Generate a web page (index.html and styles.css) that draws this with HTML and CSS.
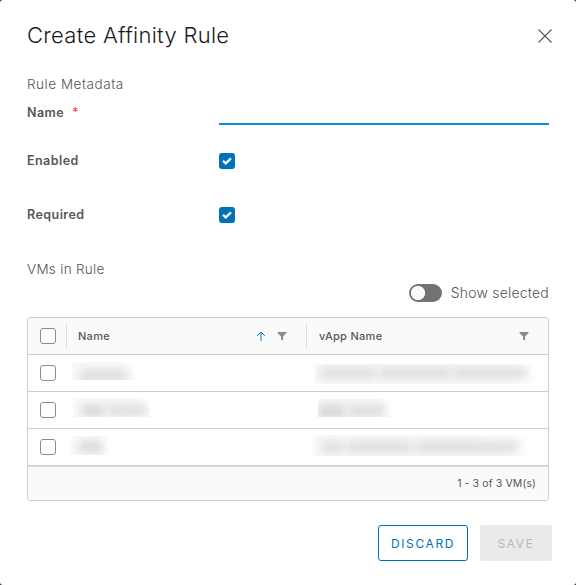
FILE: index.html
```html
<!DOCTYPE html>
<html lang="en">
<head>
<meta charset="utf-8">
<title>Create Affinity Rule</title>
<link rel="stylesheet" href="styles.css">
</head>
<body>
<main class="modal">
  <header class="modal-header">
    <h1 class="title">Create Affinity Rule</h1>
    <svg class="close" viewBox="0 0 16 16"><path d="M1.5 1.5l13 13M14.5 1.5l-13 13"/></svg>
  </header>
  <h2 class="section meta">Rule Metadata</h2>
  <div class="field name-field">
    <label class="label">Name<span class="star">*</span></label>
    <div class="input"></div>
  </div>
  <div class="field check-field">
    <label class="label">Enabled</label>
    <span class="box checked"><svg viewBox="0 0 16 16"><path d="M4 7.8l2.7 2.6L12 5.4"/></svg></span>
  </div>
  <div class="field check-field">
    <label class="label">Required</label>
    <span class="box checked"><svg viewBox="0 0 16 16"><path d="M4 7.8l2.7 2.6L12 5.4"/></svg></span>
  </div>
  <h2 class="section vms">VMs in Rule</h2>
  <div class="toggle-row">
    <span class="switch"></span><span class="toggle-label">Show selected</span>
  </div>
  <section class="grid">
    <div class="row head">
      <span class="box"></span>
      <div class="col first"><span class="th">Name</span>
        <svg class="sort" viewBox="0 0 10 10"><path d="M5 10V1M1.2 4.8L5 1l3.8 3.8"/></svg>
        <svg class="filter" viewBox="0 0 10 9"><path d="M.5 0h9v1L6.1 4.5V8.6L4 7.6V4.5L.5 1z"/></svg>
      </div>
      <div class="col second"><span class="th">vApp Name</span>
        <svg class="filter" viewBox="0 0 10 9"><path d="M.5 0h9v1L6.1 4.5V8.6L4 7.6V4.5L.5 1z"/></svg>
      </div>
    </div>
    <div class="row"><span class="box"></span>
      <div class="cell first"><div class="mask a1"><i></i></div></div>
      <div class="cell"><div class="mask b1"><i></i><i></i><i></i></div></div>
    </div>
    <div class="row"><span class="box"></span>
      <div class="cell first"><div class="mask a2"><i></i><i></i></div></div>
      <div class="cell"><div class="mask b2"><i></i><i></i></div></div>
    </div>
    <div class="row"><span class="box"></span>
      <div class="cell first"><div class="mask a3"><i></i></div></div>
      <div class="cell"><div class="mask b3"><i></i><i></i><i></i></div></div>
    </div>
    <footer class="grid-footer">1 - 3 of 3 VM(s)</footer>
  </section>
  <div class="actions">
    <button class="btn discard">DISCARD</button>
    <button class="btn save" disabled>SAVE</button>
  </div>
</main>
</body>
</html>
```
FILE: styles.css
```css
* { box-sizing: border-box; }
body { margin: 0; background: #313131; font-family: Inter, "Noto Sans", sans-serif; color: #565656; }
.modal { width: 576px; height: 585px; background: #fff; border-radius: 3px; padding: 20px 23px 0 27px; display: flex; flex-direction: column; }
.modal-header { display: flex; justify-content: space-between; align-items: center; height: 32px; }
.title { margin: 0; font-size: 22px; font-weight: 300; line-height: 30px; padding-bottom: 2px; letter-spacing: 0.28px; color: #1c1c1c; }
.close { width: 16px; height: 16px; fill: none; stroke: #565656; stroke-width: 1.1; }
.section { margin: 0; font-size: 13.5px; font-weight: 300; line-height: 20px; letter-spacing: 0.3px; color: #565656; }
.meta { margin-top: 22px; letter-spacing: 0.53px; }
.field { display: flex; align-items: center; }
.label { width: 192px; font-size: 12.5px; font-weight: 600; color: #565656; line-height: 20px; letter-spacing: 0.45px; }
.star { color: #f04040; font-weight: 400; margin-left: 8px; }
.name-field { height: 31px; }
.name-field .label { margin-top: 6px; }
.input { width: 330px; height: 31px; border-bottom: 2px solid #0095d3; }
.check-field { height: 16px; margin-top: 28px; }
.check-field + .check-field { margin-top: 38px; }
.box { width: 16px; height: 16px; border: 1px solid #8c8c8c; border-radius: 3px; flex: none; background: #fff; }
.checked { border: 0; background: #0072b8; }
.checked svg { display: block; width: 16px; height: 16px; fill: none; stroke: #fff; stroke-width: 2.2; }
.vms { margin-top: 36px; }
.toggle-row { display: flex; justify-content: flex-end; align-items: center; height: 20px; margin: 4px 4px 0 0; }
.switch { width: 33px; height: 18px; border-radius: 9px; background: radial-gradient(circle at 9px 9px, #fafafa 6.8px, #737373 7.4px); margin-right: 9px; }
.toggle-label { font-size: 14px; font-weight: 300; line-height: 18px; padding-bottom: 1px; letter-spacing: 0.2px; }
.grid { width: 522px; height: 184px; margin-top: 14px; border: 1px solid #ccc; border-radius: 3px; overflow: hidden; flex: none; }
.row { display: flex; align-items: center; height: 37px; padding-left: 12px; border-bottom: 1px solid #ccc; background: #fff; }
.head { background: #fafafa; }
.col { display: flex; align-items: center; height: 25px; border-left: 1px solid #ddd; padding-left: 11px; }
.col.first { width: 240px; margin-left: 10px; }
.col.second { width: 242px; padding-left: 12px; }
.th { font-size: 11px; font-weight: 500; letter-spacing: 0.3px; margin-right: auto; }
.sort { width: 10px; height: 10px; fill: none; stroke: #0079b8; margin-right: 11px; }
.filter { width: 10px; height: 9px; fill: #8c8c8c; margin-right: 19px; }
.cell { width: 242px; height: 36px; overflow: hidden; }
.cell.first { width: 240px; margin-left: 10px; }

/* Redacted values: clipped groups of blurred bars */
.mask { display: flex; gap: 3px; overflow: hidden; background: linear-gradient(90deg, #fafafa 70%, #fff); }
.mask i { height: 12px; background: #dedede; filter: blur(5px); flex: none; }
.a1 { width: 66px; height: 18px; margin: 7px 0 0 6px; padding: 7px 0 0 7px; }
.a1 i { width: 49px; height: 13px; }
.a2 { width: 77px; height: 19px; margin: 6px 0 0 7px; padding: 6px 0 0 8px; }
.a2 i:first-child { width: 23px; height: 13px; background: #d8d8d8; }
.a2 i:last-child { width: 40px; }
.a3 { width: 40px; height: 19px; margin: 7px 0 0 5px; padding: 5px 0 0 8px; }
.a3 i { width: 23px; background: #d8d8d8; }
.b1 { width: 224px; height: 20px; margin: 9px 0 0 9px; padding: 3px 0 0 5px; }
.b1 i { width: 55px; }
.b1 i:nth-child(2) { width: 72px; }
.b1 i:nth-child(3) { width: 74px; }
.b2 { width: 77px; height: 18px; margin: 7px 0 0 12px; padding: 5px 0 0; }
.b2 i:first-child { width: 27px; height: 15px; background: #d8d8d8; }
.b2 i:last-child { width: 37px; height: 14px; }
.b3 { width: 220px; height: 21px; margin: 6px 0 0 7px; padding: 6px 0 0 8px; }
.b3 i { width: 22px; }
.b3 i:nth-child(2) { width: 66px; }
.b3 i:nth-child(3) { width: 103px; }

.grid-footer { height: 35px; background: #fafafa; border-top: 1px solid #ddd; display: flex; align-items: center; justify-content: flex-end; padding: 0 12px 2px 0; font-size: 10.5px; letter-spacing: 0.12px; }
.actions { display: flex; justify-content: flex-end; gap: 12px; margin: 24px 1px 0 0; }
.btn { height: 36px; border-radius: 3px; font: 400 12px Inter, sans-serif; letter-spacing: 1.6px; padding: 0; }
.discard { width: 90px; border: 1px solid #0072b8; background: #fff; color: #0072b8; }
.save { width: 72px; border: 0; background: #eaeaea; color: #b8b8b8; }
```
